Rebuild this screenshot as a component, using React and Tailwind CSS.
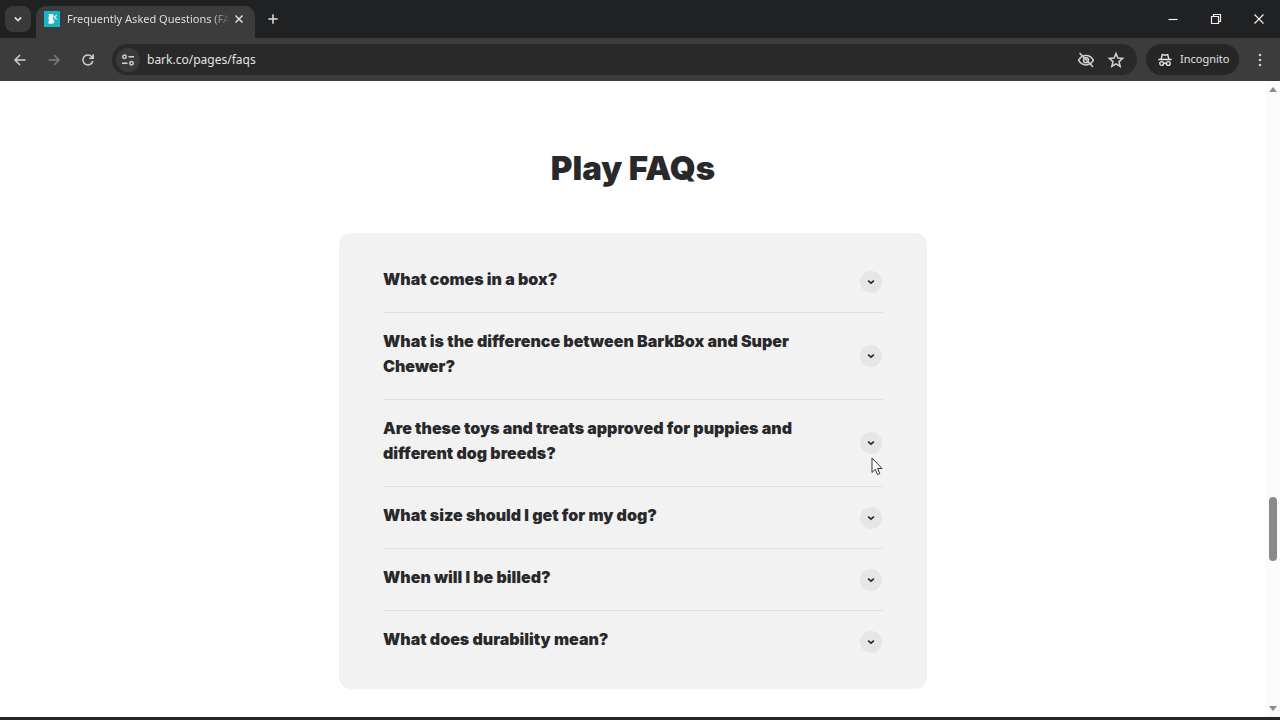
import React from "react";

const QUESTIONS = [
  "What comes in a box?",
  "What is the difference between BarkBox and Super Chewer?",
  "Are these toys and treats approved for puppies and different dog breeds?",
  "What size should I get for my dog?",
  "When will I be billed?",
  "What does durability mean?",
];

function Icon({ className = "size-4", width = 1.5, children }) {
  return (
    <svg
      viewBox="0 0 16 16"
      className={className}
      fill="none"
      stroke="currentColor"
      strokeWidth={width}
      aria-hidden="true"
    >
      {children}
    </svg>
  );
}

function TabStrip() {
  return (
    <div className="flex h-[38px] items-stretch bg-[#202122] text-[#dedede]">
      <div className="flex w-9 items-center pl-[5px]">
        <button aria-label="Search tabs" className="flex size-[26px] items-center justify-center rounded-lg bg-[#3a3a3b]">
          <Icon className="size-4" width={1.7}>
            <path d="m4.800 6.400 3.200 3.200 3.200-3.200" />
          </Icon>
        </button>
      </div>
      <div className="flex w-[219px] items-end pt-1.5">
        <div className="flex h-8 w-full items-center rounded-t-[10px] bg-[#3c3c3c] pr-2 pb-1.5 pl-2">
          <svg viewBox="0 0 16 16" className="size-4 shrink-0" aria-hidden="true">
            <rect width="16" height="16" fill="#18b6c4" />
            <path
              d="M4.500 3h3.200a2 2 0 0 1 1.600 3.200L8.600 7.500l1 1.300A2.400 2.400 0 0 1 7.800 12.800H4.500V10l1-.8-1-1V5.800l1-.8-1-.9Z"
              fill="#f2fbfc"
            />
            <path d="m12.600 4.200-2.200 2 2.200 2.200" fill="none" stroke="#d8f4f7" strokeWidth="1.300" />
          </svg>
          <span className="ml-[7px] whitespace-nowrap text-[11px] [mask-image:linear-gradient(to_right,black_88%,transparent)]">
            Frequently Asked Questions (FA
          </span>
          <button aria-label="Close tab" className="ml-auto">
            <Icon className="size-4" width={1.5}>
              <path d="m4.500 4.500 7 7m0-7-7 7" />
            </Icon>
          </button>
        </div>
      </div>
      <button aria-label="New tab" className="ml-2.5">
        <Icon className="size-4" width={1.5}>
          <path d="M8 3.300v9.400M3.300 8h9.400" />
        </Icon>
      </button>
      <div className="ml-auto flex items-center gap-[27px] pr-[13px] text-[#f0f0f0]">
        <button aria-label="Minimize">
          <Icon width={1.2}>
            <path d="M3.500 8.500h9" />
          </Icon>
        </button>
        <button aria-label="Restore">
          <Icon width={1.2}>
            <path d="M3.500 5.500h7v7h-7zM5.500 5.500v-2h7v7h-2" />
          </Icon>
        </button>
        <button aria-label="Close window">
          <Icon width={1.2}>
            <path d="m3.500 3.500 9 9m0-9-9 9" />
          </Icon>
        </button>
      </div>
    </div>
  );
}

function Toolbar() {
  return (
    <div className="flex h-[43px] items-center bg-[#3c3c3c] px-3 text-[#d0d0d0]">
      <div className="flex w-[100px] items-center gap-[18px]">
        <button aria-label="Back">
          <Icon>
            <path d="M13.500 8H3m5-5L3 8l5 5" />
          </Icon>
        </button>
        <button aria-label="Forward" className="text-[#7c7c7c]">
          <Icon>
            <path d="M2.500 8H13M8 3l5 5-5 5" />
          </Icon>
        </button>
        <button aria-label="Reload">
          <Icon>
            <path d="M12.800 9A5 5 0 1 1 11.700 4.600l1.300 1.300M13.200 2.200v4h-4" />
          </Icon>
        </button>
      </div>
      <div className="flex h-[31px] flex-1 items-center rounded-full bg-[#292929] pr-3 pl-1">
        <button aria-label="Site information" className="flex size-6 items-center justify-center rounded-full bg-[#3a3a3a]">
          <Icon>
            <circle cx="4.500" cy="4.800" r="1.700" />
            <path d="M8.500 4.800h5.500M2 11.200h5.500" />
            <circle cx="11.500" cy="11.200" r="1.700" />
          </Icon>
        </button>
        <input
          aria-label="Address"
          defaultValue="bark.co/pages/faqs"
          className="ml-[7px] min-w-0 flex-1 bg-transparent text-xs text-[#e2e2e2] outline-none"
        />
        <button aria-label="Third-party cookies blocked">
          <Icon className="size-[18px]" width={1.4}>
            <path d="M1.500 8.200C2.800 5.600 5.200 4 8 4s5.200 1.600 6.500 4.200C13.200 10.800 10.800 12.400 8 12.400S2.800 10.800 1.500 8.200Z" />
            <circle cx="8" cy="8.200" r="2.200" />
            <path d="m2.300 1.800 12 12.400" />
          </Icon>
        </button>
        <button aria-label="Bookmark this page" className="ml-3">
          <Icon className="size-[18px]" width={1.4}>
            <path d="m8 2.300 1.700 3.900 4.200.4-3.200 2.800 1 4.200L8 11.400l-3.700 2.200 1-4.200-3.200-2.800 4.200-.4Z" />
          </Icon>
        </button>
      </div>
      <button className="ml-[9px] flex h-[31px] w-[93px] items-center gap-[7px] rounded-full bg-[#262626] pl-[11px] text-[11px] text-[#e2e2e2]">
        <Icon width={1.4}>
          <path d="M4.200 7 5.300 2.500 8 3.200l2.700-.7L11.800 7M1.300 7.500h13.400" />
          <circle cx="4.700" cy="11.500" r="1.900" />
          <circle cx="11.300" cy="11.500" r="1.900" />
          <path d="M6.600 11.200h2.800" />
        </Icon>
        Incognito
      </button>
      <button aria-label="Browser menu" className="ml-[13px]">
        <svg viewBox="0 0 16 16" className="size-4" fill="currentColor" aria-hidden="true">
          <circle cx="8" cy="3" r="1.300" />
          <circle cx="8" cy="8" r="1.300" />
          <circle cx="8" cy="13" r="1.300" />
        </svg>
      </button>
    </div>
  );
}

function Question({ text }) {
  return (
    <li className="border-b border-[#dfdfdf] last:border-b-0">
      <button className="flex w-full items-center justify-between text-left">
        <span className="max-w-[440px] pt-4 pb-5 text-base leading-[25px] font-black">{text}</span>
        <span className="mr-px flex size-[22px] shrink-0 items-center justify-center rounded-full bg-[#e6e6e6]">
          <Icon className="size-3" width={2.2}>
            <path d="m4.200 6.300 3.800 3.200 3.800-3.200" />
          </Icon>
        </span>
      </button>
    </li>
  );
}

function Scrollbar() {
  return (
    <div className="flex w-3.5 shrink-0 flex-col items-center bg-[#fcfcfc] py-1.5" aria-hidden="true">
      <svg viewBox="0 0 8 5" className="h-[5px] w-2 fill-[#8a8a8a]">
        <path d="M4 0 8 5H0Z" />
      </svg>
      <div className="grow-[405]" />
      <div className="h-16 w-2 rounded-full bg-[#8a8a8a]" />
      <div className="grow-[145]" />
      <svg viewBox="0 0 8 5" className="h-[5px] w-2 fill-[#8a8a8a]">
        <path d="M0 0h8L4 5Z" />
      </svg>
    </div>
  );
}

export default function App() {
  return (
    <div className="relative flex h-screen flex-col overflow-hidden bg-white font-['Noto_Sans','Open_Sans',sans-serif]">
      <header>
        <TabStrip />
        <Toolbar />
      </header>
      <div className="flex min-h-0 flex-1">
        <main className="flex-1 overflow-hidden px-6 pt-[67px] font-['Inter',sans-serif] text-[#29282a]">
          <h1 className="text-center text-[33px] leading-10 font-black">Play FAQs</h1>
          <ul className="mx-auto mt-[45px] max-w-[588px] rounded-xl bg-[#f2f2f2] px-11 pt-[18px] pb-[17px]">
            {QUESTIONS.map((text) => (
              <Question key={text} text={text} />
            ))}
          </ul>
        </main>
        <Scrollbar />
      </div>
      <footer className="h-[3px] bg-[#252525]" />
      <svg viewBox="0 0 12 19" className="absolute top-[457px] left-[871px] h-[19px] w-3" aria-hidden="true">
        <path
          d="M1 1v14.500l3.300-3.200 2.200 5.200 2.300-1-2.200-5H11Z"
          fill="#fff"
          stroke="#333"
          strokeWidth="1"
        />
      </svg>
    </div>
  );
}
